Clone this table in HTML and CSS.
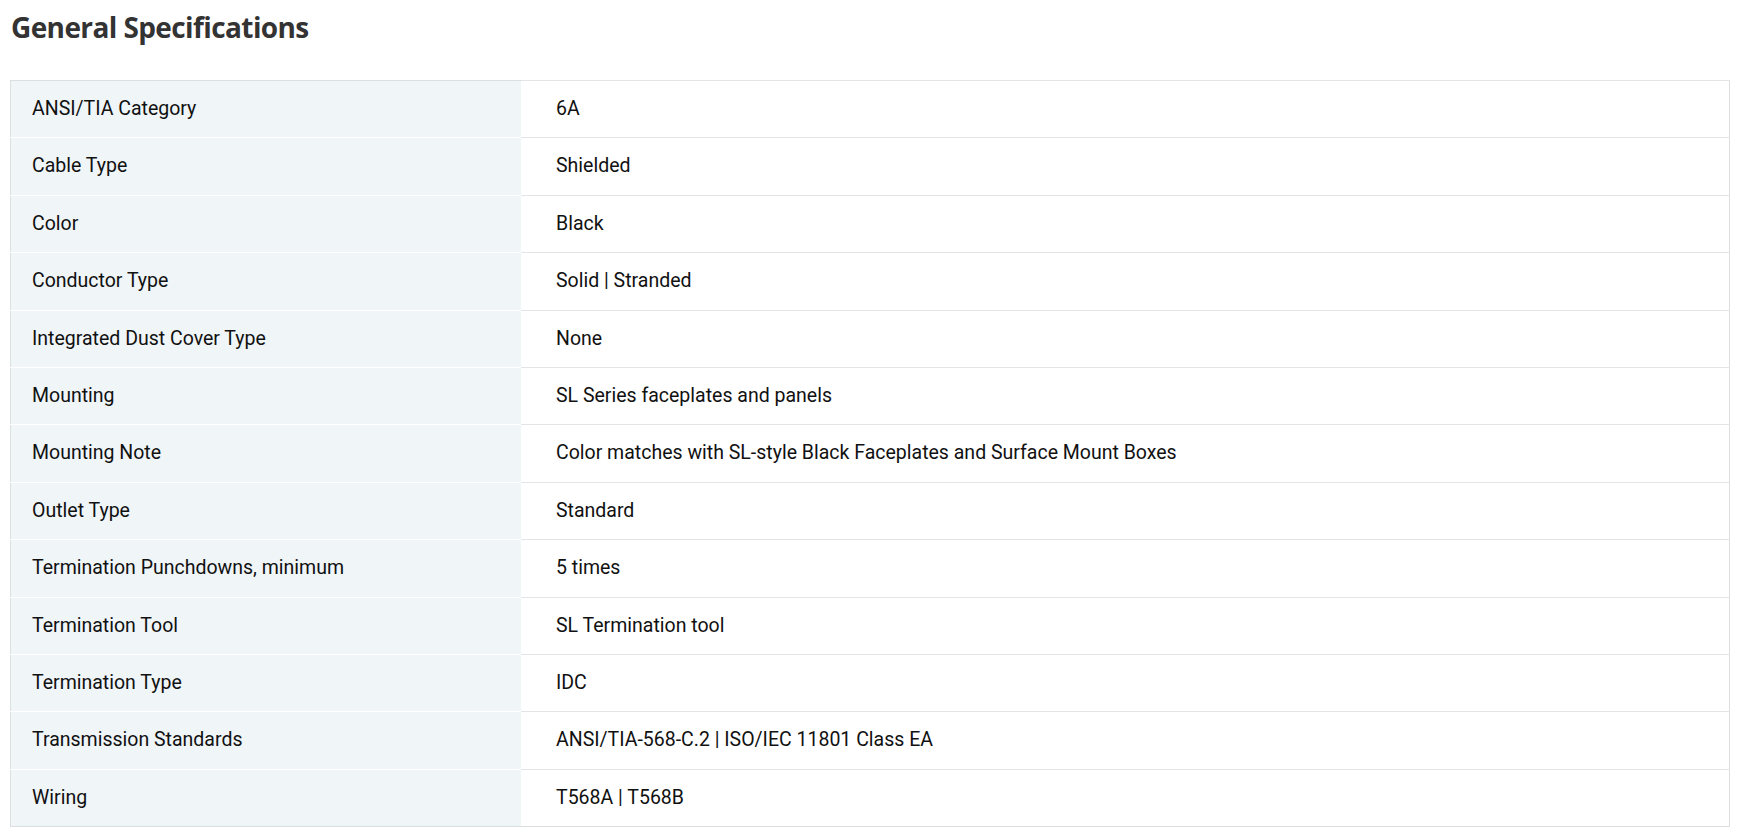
FILE: index.html
```html
<!DOCTYPE html>
<html lang="en">
<head>
  <meta charset="UTF-8" />
  <meta name="viewport" content="width=device-width, initial-scale=1.0"/>
  <title>General Specifications</title>
  <link rel="stylesheet" href="styles.css">
</head>
<body>

<section class="specs">
  <h2>General Specifications</h2>

  <table class="spec-table">
    <tr><th>ANSI/TIA Category</th><td>6A</td></tr>
    <tr><th>Cable Type</th><td>Shielded</td></tr>
    <tr><th>Color</th><td>Black</td></tr>
    <tr><th>Conductor Type</th><td>Solid | Stranded</td></tr>
    <tr><th>Integrated Dust Cover Type</th><td>None</td></tr>
    <tr><th>Mounting</th><td>SL Series faceplates and panels</td></tr>
    <tr><th>Mounting Note</th><td>Color matches with SL-style Black Faceplates and Surface Mount Boxes</td></tr>
    <tr><th>Outlet Type</th><td>Standard</td></tr>
    <tr><th>Termination Punchdowns, minimum</th><td>5 times</td></tr>
    <tr><th>Termination Tool</th><td>SL Termination tool</td></tr>
    <tr><th>Termination Type</th><td>IDC</td></tr>
    <tr><th>Transmission Standards</th><td>ANSI/TIA-568-C.2 | ISO/IEC 11801 Class EA</td></tr>
    <tr><th>Wiring</th><td>T568A | T568B</td></tr>
  </table>
</section>

</body>
</html>
```

FILE: styles.css
```css
body {
  margin: 0;
  padding: 0 8px 0 10px;
  font-family: Roboto, Arial, sans-serif;
  background: #fff;
}
h2 {
  margin: 0;
  padding: 8px 0 0 1px;
  height: 80px;
  box-sizing: border-box;
  font-family: "Open Sans", sans-serif;
  font-weight: 700;
  font-size: 28px;
  letter-spacing: -0.6px;
  color: #333;
}
.spec-table {
  width: 1720px;
  border-collapse: collapse;
  border: 1px solid #dcdfe0;
  font-size: 19.5px;
  color: #111;
}
.spec-table th,
.spec-table td {
  padding: 18px 0;
  line-height: 20.4px;
  text-align: left;
  font-weight: 400;
  vertical-align: middle;
}
.spec-table th {
  width: 489px;
  padding-left: 21px;
  background: #f0f5f8;
  border-bottom: 1px solid #fff;
}
.spec-table td {
  padding-left: 35px;
  border-bottom: 1px solid #e2e4e5;
}
.spec-table tr:first-child td {
  border-top: 1px solid #e2e4e5;
}
.spec-table tr:last-child th,
.spec-table tr:last-child td {
  border-bottom: 1px solid #dcdfe0;
}
```
